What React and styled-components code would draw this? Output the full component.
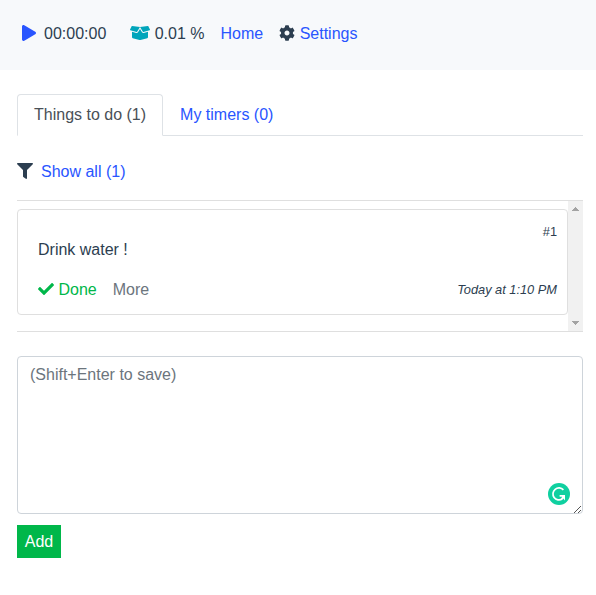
import React from "react";
import styled, { createGlobalStyle } from "styled-components";
import { FaPlay, FaBoxOpen, FaCog, FaFilter, FaCheck } from "react-icons/fa";

const GlobalStyle = createGlobalStyle`
  * { box-sizing: border-box; }
  body {
    margin: 0;
    background: #fff;
    color: #2c3e50;
    font-family: "Liberation Sans", Arial, sans-serif;
    font-size: 16px;
    line-height: 24px;
  }
`;

const Navbar = styled.nav`
  display: flex;
  align-items: flex-start;
  height: 70px;
  padding: 22px 22px 0;
  background: #f7f9fb;
`;

const NavItem = styled.div`
  display: flex;
  align-items: center;
  height: 24px;
  gap: ${(p) => p.$gap || 0}px;
  margin-right: ${(p) => p.$after || 0}px;
  white-space: nowrap;
  svg {
    display: block;
    flex: none;
    width: ${(p) => p.$iconWidth || 16}px;
    height: 16px;
    margin-bottom: 2px;
    color: ${(p) => p.$icon || "inherit"};
  }
`;

const Link = styled.a`
  color: #2955ff;
  text-decoration: none;
  cursor: pointer;
`;

const Main = styled.main`
  padding: 24px 13px 0 17px;
`;

const Tabs = styled.div`
  display: flex;
  height: 42px;
  box-shadow: inset 0 -1px #dee2e6;
`;

const Tab = styled.div`
  height: 42px;
  padding: 8px 16px;
  border: 1px solid transparent;
  border-color: ${(p) => (p.$active ? "#dee2e6 #dee2e6 #fff" : "transparent")};
  border-radius: 4px 4px 0 0;
  background: ${(p) => (p.$active ? "#fff" : "transparent")};
  color: ${(p) => (p.$active ? "#495057" : "#2955ff")};
  white-space: nowrap;
`;

const FilterRow = styled.div`
  display: flex;
  align-items: center;
  gap: 8px;
  height: 24px;
  margin: 24px 0 16px;
  svg { margin-bottom: 2px; }
`;

const ListFrame = styled.section`
  display: flex;
  height: 132px;
  border-top: 1px solid #dfdfdf;
  border-bottom: 1px solid #dfdfdf;
`;

const List = styled.div`
  flex: 1;
  padding-top: 8px;
`;

const ScrollTrack = styled.div`
  display: flex;
  flex-direction: column;
  justify-content: space-between;
  align-items: center;
  width: 15px;
  padding: 6px 0 6px;
  background: #f1f1f1;
  svg { display: block; }
`;

const Card = styled.article`
  height: 106px;
  padding: 10px;
  border: 1px solid #dfdfdf;
  border-radius: 4px;
`;

const CardId = styled.div`
  height: 18px;
  font-size: 12.8px;
  text-align: right;
`;

const CardText = styled.div`
  padding-left: 10px;
`;

const CardFooter = styled.div`
  display: flex;
  align-items: center;
  height: 24px;
  margin-top: 16px;
  padding-left: 10px;
`;

const Action = styled.span`
  display: flex;
  align-items: center;
  gap: 4.45px;
  margin-right: 16px;
  color: ${(p) => p.$color};
  svg { margin-bottom: 2px; }
`;

const DueDate = styled.em`
  margin-left: auto;
  font-size: 12.8px;
`;

const Editor = styled.div`
  position: relative;
  height: 158px;
  margin-top: 24px;
`;

const TextArea = styled.textarea`
  display: block;
  width: 100%;
  height: 100%;
  padding: 6px 12px;
  border: 1px solid #ced4da;
  border-radius: 4px;
  background: #fff;
  color: #495057;
  font: inherit;
  resize: none;
  outline: none;
  &::placeholder { color: #6c757d; opacity: 1; }
`;

const AssistantBadge = styled.svg`
  position: absolute;
  right: 13px;
  bottom: 9px;
`;

const ResizeGrip = styled.svg`
  position: absolute;
  right: 1px;
  bottom: 1px;
`;

const AddButton = styled.button`
  display: block;
  width: 44px;
  height: 33px;
  margin-top: 11px;
  padding: 0;
  border: 0;
  background: #00b74a;
  color: #fff;
  font: inherit;
`;

export default function App() {
  return (
    <>
      <GlobalStyle />
      <Navbar>
        <NavItem $gap={8} $after={24} $icon="#2955ff" $iconWidth={14}>
          <FaPlay />
          <span>00:00:00</span>
        </NavItem>
        <NavItem $gap={4.45} $after={16} $icon="#00a5bb" $iconWidth={20}>
          <FaBoxOpen />
          <span>0.01 %</span>
        </NavItem>
        <NavItem $after={16}>
          <Link>Home</Link>
        </NavItem>
        <NavItem $gap={4.45}>
          <FaCog />
          <Link>Settings</Link>
        </NavItem>
      </Navbar>
      <Main>
        <Tabs>
          <Tab $active>Things to do (1)</Tab>
          <Tab>My timers (0)</Tab>
        </Tabs>
        <FilterRow>
          <FaFilter />
          <Link>Show all (1)</Link>
        </FilterRow>
        <ListFrame>
          <List>
            <Card>
              <CardId>#1</CardId>
              <CardText>Drink water !</CardText>
              <CardFooter>
                <Action $color="#00b74a">
                  <FaCheck />
                  Done
                </Action>
                <Action $color="#6c757d">More</Action>
                <DueDate>Today at 1:10 PM</DueDate>
              </CardFooter>
            </Card>
          </List>
          <ScrollTrack>
            <svg width="7" height="4" shapeRendering="crispEdges">
              <path d="M0 4V3H1V2H2V1H3V0H4V1H5V2H6V3H7V4Z" fill="#a3a3a3" />
            </svg>
            <svg width="7" height="4" shapeRendering="crispEdges">
              <path d="M0 0V1H1V2H2V3H3V4H4V3H5V2H6V1H7V0Z" fill="#a3a3a3" />
            </svg>
          </ScrollTrack>
        </ListFrame>
        <Editor>
          <TextArea placeholder="(Shift+Enter to save)" spellCheck={false} />
          <AssistantBadge width="22" height="22" viewBox="0 0 22 22">
            <circle cx="11" cy="11" r="11" fill="#0fd0a0" />
            <path
              d="M15.4 6.9A6 6 0 1 0 14.2 16"
              fill="none"
              stroke="#fff"
              strokeWidth="1.7"
            />
            <path d="M11.6 12H17V17.4L15.3 15.6L14 16.7L13 15.5L14.2 13.7H11.6Z" fill="#fff" />
          </AssistantBadge>
          <ResizeGrip width="8" height="8" viewBox="0 0 8 8" shapeRendering="crispEdges">
            <path
              d="M0 7h1v1H0zM1 6h1v1H1zM2 5h1v1H2zM3 4h1v1H3zM4 3h1v1H4zM5 2h1v1H5zM6 1h1v1H6zM4 7h1v1H4zM5 6h1v1H5zM6 5h1v1H6z"
              fill="#555"
            />
          </ResizeGrip>
        </Editor>
        <AddButton>Add</AddButton>
      </Main>
    </>
  );
}
